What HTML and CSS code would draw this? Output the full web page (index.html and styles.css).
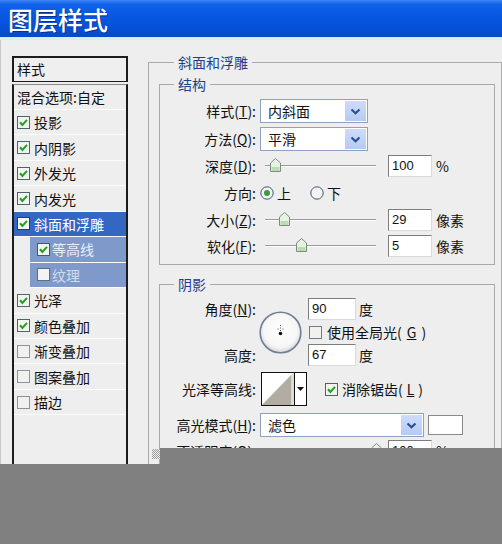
FILE: index.html
```html
<!DOCTYPE html>
<html lang="zh-CN">
<head>
<meta charset="utf-8">
<title>图层样式</title>
<link rel="stylesheet" href="styles.css">
</head>
<body>
<div class="win">
  <div class="titlebar"><span class="title">图层样式</span></div>
  <div class="body">
    <div class="side">
      <div class="side-head">样式</div>
      <div class="side-list">
        <div class="row blend">混合选项:自定</div>
        <div class="row"><svg class="cb" viewBox="0 0 13 13"><rect x="0.5" y="0.5" width="12" height="12" fill="#f3f3ef" stroke="#4b6470"/><path d="M3 6.3 L5.4 8.9 L10 3.9" fill="none" stroke="#21a121" stroke-width="2"/></svg>投影</div>
        <div class="row"><svg class="cb" viewBox="0 0 13 13"><rect x="0.5" y="0.5" width="12" height="12" fill="#f3f3ef" stroke="#4b6470"/><path d="M3 6.3 L5.4 8.9 L10 3.9" fill="none" stroke="#21a121" stroke-width="2"/></svg>内阴影</div>
        <div class="row"><svg class="cb" viewBox="0 0 13 13"><rect x="0.5" y="0.5" width="12" height="12" fill="#f3f3ef" stroke="#4b6470"/><path d="M3 6.3 L5.4 8.9 L10 3.9" fill="none" stroke="#21a121" stroke-width="2"/></svg>外发光</div>
        <div class="row"><svg class="cb" viewBox="0 0 13 13"><rect x="0.5" y="0.5" width="12" height="12" fill="#f3f3ef" stroke="#4b6470"/><path d="M3 6.3 L5.4 8.9 L10 3.9" fill="none" stroke="#21a121" stroke-width="2"/></svg>内发光</div>
        <div class="row sel"><svg class="cb" viewBox="0 0 13 13"><rect x="0.5" y="0.5" width="12" height="12" fill="#f6f6f6" stroke="#1d3c70"/><path d="M3 6.3 L5.4 8.9 L10 3.9" fill="none" stroke="#21a121" stroke-width="2"/></svg>斜面和浮雕</div>
        <div class="row sub"><svg class="cb" viewBox="0 0 13 13"><rect x="0.5" y="0.5" width="12" height="12" fill="#f3f3ef" stroke="#3e5878"/><path d="M3 6.3 L5.4 8.9 L10 3.9" fill="none" stroke="#21a121" stroke-width="2"/></svg>等高线</div>
        <div class="row sub dim"><svg class="cb" viewBox="0 0 13 13"><rect x="0.5" y="0.5" width="12" height="12" fill="#f3f3ef" stroke="#55708e"/></svg>纹理</div>
        <div class="row"><svg class="cb" viewBox="0 0 13 13"><rect x="0.5" y="0.5" width="12" height="12" fill="#f3f3ef" stroke="#4b6470"/><path d="M3 6.3 L5.4 8.9 L10 3.9" fill="none" stroke="#21a121" stroke-width="2"/></svg>光泽</div>
        <div class="row"><svg class="cb" viewBox="0 0 13 13"><rect x="0.5" y="0.5" width="12" height="12" fill="#f3f3ef" stroke="#4b6470"/><path d="M3 6.3 L5.4 8.9 L10 3.9" fill="none" stroke="#21a121" stroke-width="2"/></svg>颜色叠加</div>
        <div class="row"><svg class="cb" viewBox="0 0 13 13"><rect x="0.5" y="0.5" width="12" height="12" fill="#f1f1ef" stroke="#8a949a"/></svg>渐变叠加</div>
        <div class="row"><svg class="cb" viewBox="0 0 13 13"><rect x="0.5" y="0.5" width="12" height="12" fill="#f1f1ef" stroke="#8a949a"/></svg>图案叠加</div>
        <div class="row"><svg class="cb" viewBox="0 0 13 13"><rect x="0.5" y="0.5" width="12" height="12" fill="#f1f1ef" stroke="#8a949a"/></svg>描边</div>
      </div>
    </div>

    <div class="main">
      <fieldset class="outer">
        <legend>斜面和浮雕</legend>

        <fieldset class="inner struct">
          <legend>结构</legend>
          <div class="sgrid">
            <div class="lbl">样式(<u>T</u>):</div>
            <div class="select w108"><span class="sv">内斜面</span><span class="dd"><svg width="11" height="7" viewBox="0 0 11 7"><path d="M1.5 1.5 L5.5 5.2 L9.5 1.5" fill="none" stroke="#2b4f8e" stroke-width="2.2"/></svg></span></div>
            <div></div><div></div>

            <div class="lbl">方法(<u>Q</u>):</div>
            <div class="select w108"><span class="sv">平滑</span><span class="dd"><svg width="11" height="7" viewBox="0 0 11 7"><path d="M1.5 1.5 L5.5 5.2 L9.5 1.5" fill="none" stroke="#2b4f8e" stroke-width="2.2"/></svg></span></div>
            <div></div><div></div>

            <div class="lbl">深度(<u>D</u>):</div>
            <div class="slider"><span class="thumb" style="left:5px"><svg width="11" height="14" viewBox="0 0 11 14"><path d="M0.5 5 L5.5 0.5 L10.5 5 L10.5 13.5 L0.5 13.5 Z" fill="#e6f2e2" stroke="#7f8a80"/><rect x="1.5" y="9" width="8" height="4" fill="#b9dcb0"/></svg></span></div>
            <div class="num">100</div>
            <div class="unit">%</div>

            <div class="lbl">方向:</div>
            <div class="radios">
              <span class="ropt"><svg width="14" height="14" viewBox="0 0 14 14"><circle cx="7" cy="7" r="6.2" fill="#f4f4f2" stroke="#3d5573"/><circle cx="7" cy="7" r="3" fill="#3d9b3d"/></svg>上</span>
              <span class="ropt"><svg width="14" height="14" viewBox="0 0 14 14"><circle cx="7" cy="7" r="6.2" fill="#f4f4f2" stroke="#3d5573"/></svg>下</span>
            </div>

            <div class="lbl">大小(<u>Z</u>):</div>
            <div class="slider"><span class="thumb" style="left:14px"><svg width="11" height="14" viewBox="0 0 11 14"><path d="M0.5 5 L5.5 0.5 L10.5 5 L10.5 13.5 L0.5 13.5 Z" fill="#e6f2e2" stroke="#7f8a80"/><rect x="1.5" y="9" width="8" height="4" fill="#b9dcb0"/></svg></span></div>
            <div class="num">29</div>
            <div class="unit">像素</div>

            <div class="lbl">软化(<u>F</u>):</div>
            <div class="slider"><span class="thumb" style="left:31px"><svg width="11" height="14" viewBox="0 0 11 14"><path d="M0.5 5 L5.5 0.5 L10.5 5 L10.5 13.5 L0.5 13.5 Z" fill="#e6f2e2" stroke="#7f8a80"/><rect x="1.5" y="9" width="8" height="4" fill="#b9dcb0"/></svg></span></div>
            <div class="num">5</div>
            <div class="unit">像素</div>
          </div>
        </fieldset>

        <fieldset class="inner shade">
          <legend>阴影</legend>
          <div class="dgrid">
            <div class="lbl r1">角度(<u>N</u>):</div>
            <div class="dial">
              <svg width="43" height="43" viewBox="0 0 43 43">
                <defs><radialGradient id="dg" cx="50%" cy="45%" r="55%"><stop offset="0%" stop-color="#ffffff"/><stop offset="75%" stop-color="#f6f6f6"/><stop offset="100%" stop-color="#d6d6d6"/></radialGradient></defs>
                <circle cx="21.5" cy="21.5" r="20.3" fill="url(#dg)" stroke="#6f7d95" stroke-width="1.6"/>
                <path d="M21.5 14 V15 M21.5 16.5 V17.5 M21.5 19 V20 M18.5 18 H19.5 M23.5 18 H24.5" stroke="#555" stroke-width="1"/>
                <circle cx="21.5" cy="22.5" r="1.8" fill="#111"/>
              </svg>
            </div>
            <div class="vu r1"><div class="num w48">90</div><span class="unit">度</span></div>
            <div class="chk r2"><svg class="cb" viewBox="0 0 13 13"><rect x="0.5" y="0.5" width="12" height="12" fill="#f1f1ef" stroke="#6e7d88"/></svg>使用全局光(<u>G</u>)</div>
            <div class="lbl r3">高度:</div>
            <div class="vu r3"><div class="num w48">67</div><span class="unit">度</span></div>
          </div>

          <div class="frow contour-row">
            <div class="lbl">光泽等高线:</div>
            <div class="contour">
              <span class="cprev"><svg width="32" height="32" viewBox="0 0 32 32"><rect width="32" height="32" fill="#fff"/><path d="M0 32 L29 2 L29 32 Z" fill="#b2ada2"/><path d="M29 2 L31 0 L32 0 L32 32 L29 32 Z" fill="#dedbd3"/></svg></span>
              <span class="carrow"><svg width="7" height="4" viewBox="0 0 7 4"><path d="M0 0 H7 L3.5 4 Z" fill="#111"/></svg></span>
            </div>
            <div class="chk aa"><svg class="cb" viewBox="0 0 13 13"><rect x="0.5" y="0.5" width="12" height="12" fill="#f3f3ef" stroke="#4b6470"/><path d="M3 6.3 L5.4 8.9 L10 3.9" fill="none" stroke="#21a121" stroke-width="2"/></svg>消除锯齿(<u>L</u>)</div>
          </div>

          <div class="frow hl-row">
            <div class="lbl">高光模式(<u>H</u>):</div>
            <div class="select w164"><span class="sv">滤色</span><span class="dd"><svg width="11" height="7" viewBox="0 0 11 7"><path d="M1.5 1.5 L5.5 5.2 L9.5 1.5" fill="none" stroke="#2b4f8e" stroke-width="2.2"/></svg></span></div>
            <div class="swatch"></div>
          </div>

          <div class="frow op-row">
            <div class="lbl">不透明度(<u>O</u>):</div>
            <div class="slider op"><span class="thumb" style="left:106px"><svg width="11" height="14" viewBox="0 0 11 14"><path d="M0.5 5 L5.5 0.5 L10.5 5 L10.5 13.5 L0.5 13.5 Z" fill="#e6f2e2" stroke="#7f8a80"/><rect x="1.5" y="9" width="8" height="4" fill="#b9dcb0"/></svg></span></div>
            <div class="num op-num">100</div>
            <div class="unit">%</div>
          </div>
        </fieldset>
      </fieldset>
    </div>
  </div>
  <div class="dots"></div>
  <div class="mask-a"></div>
  <div class="mask-b"></div>
</div>
</body>
</html>
```

FILE: styles.css
```css
html, body {
  margin: 0;
  padding: 0;
}
body {
  width: 502px;
  height: 544px;
  overflow: hidden;
  background: #808080;
  font-family: "Noto Sans CJK SC", "Noto Sans", sans-serif;
  font-size: 14px;
  color: #111;
}
.win {
  position: relative;
  width: 502px;
  height: 544px;
  background: #eeeeee;
  box-shadow: inset 1px 0 0 #c9c9c9;
}
.titlebar {
  height: 40px;
  box-sizing: border-box;
  padding: 2px 0 0 8px;
  display: flex;
  align-items: center;
  background: linear-gradient(#3a86f4 0%, #1060e8 12%, #0756e0 50%, #0650d8 80%, #0a48c4 100%);
  border-bottom: 3px solid #dbeaf5;
}
.title {
  color: #fff;
  font-size: 25px;
  font-weight: 500;
  line-height: 1;
  text-shadow: 1px 1px 0 #0b2f8a;
}
.body {
  display: flex;
  align-items: flex-start;
}

/* left list */
.side {
  margin: 16px 0 0 12px;
  width: 116px;
  height: 420px;
  display: flex;
  flex-direction: column;
}
.side-head {
  height: 26px;
  box-sizing: border-box;
  border: 2px solid #1c1c1c;
  border-bottom-width: 1px;
  padding-left: 3px;
  line-height: 22px;
  background: #efefef;
}
.side-list {
  flex: 1;
  margin-top: 2px;
  border-top: 1px solid #8a8a8a;
  border-left: 2px solid #1c1c1c;
  border-right: 2px solid #1c1c1c;
  background: #eeeeee;
}
.row {
  height: 25.45px;
  box-sizing: border-box;
  border-bottom: 1px solid #fcfcfc;
  display: flex;
  align-items: center;
  gap: 4px;
  padding-left: 3px;
  white-space: nowrap;
}
.row.blend {
  height: 25px;
}
.cb {
  width: 13px;
  height: 13px;
  flex: none;
  display: block;
}
.row.sel {
  background: #3467c2;
  color: #fff;
}
.row.sub {
  margin-left: 16px;
  padding-left: 7px;
  gap: 2px;
  background: #7f99cb;
  color: #e8eefa;
}
.row.sub.dim {
  color: #d3ddf0;
}

/* right panel */
.main {
  margin-left: 20px;
  width: 354px;
}
fieldset {
  margin: 0;
  padding: 0;
  min-width: 0;
  border: 1px solid #a9a9a9;
}
legend {
  font-size: 14px;
  line-height: 16px;
  padding: 0 4px;
  color: #1e3f8a;
}
.outer {
  margin-top: 14px;
  padding: 0 6px 0 10px;
  height: 460px;
  box-sizing: border-box;
}
.outer > legend {
  margin-left: 15px;
}
.inner > legend {
  margin-left: 14px;
}
.struct {
  margin-top: 6px;
  padding: 7px 0 7px 0;
}
.shade {
  margin-top: 11px;
  padding: 6px 0 20px 0;
}
.sgrid {
  display: grid;
  grid-template-columns: 96px 124px 44px auto;
  grid-template-rows: 24px 24px 22px 24px 22px 22px;
  column-gap: 4px;
  row-gap: 4px;
}
.lbl {
  text-align: right;
  white-space: nowrap;
  align-self: center;
  line-height: 18px;
}
u {
  text-decoration: underline;
  text-underline-offset: 1px;
}
.select {
  display: flex;
  height: 24px;
  box-sizing: border-box;
  border: 1px solid #8ea2bf;
  background: #fff;
}
.w108 { width: 108px; }
.w164 { width: 164px; }
.sv {
  flex: 1;
  padding-left: 7px;
  line-height: 22px;
  white-space: nowrap;
}
.dd {
  width: 21px;
  margin: 1px;
  background: linear-gradient(#cddcfb, #b6cbf3);
  display: flex;
  align-items: center;
  justify-content: center;
}
.slider {
  position: relative;
  margin-left: 5px;
  width: 111px;
  height: 22px;
  align-self: center;
}
.slider::before {
  content: "";
  position: absolute;
  left: 0;
  right: 0;
  top: 10px;
  height: 0;
  border-top: 1px solid #9c9c9c;
  border-bottom: 1px solid #ffffff;
}
.thumb {
  position: absolute;
  top: 3px;
  width: 11px;
  height: 14px;
}
.thumb svg { display: block; }
.num {
  width: 44px;
  height: 22px;
  box-sizing: border-box;
  border: 1px solid;
  border-color: #7d7d7d #dadada #dadada #7d7d7d;
  background: #fff;
  font-family: "Liberation Sans", Arial, sans-serif;
  font-size: 13px;
  line-height: 20px;
  padding-left: 3px;
  align-self: center;
}
.unit {
  align-self: center;
  white-space: nowrap;
  line-height: 18px;
}
.radios {
  grid-column: 2 / 5;
  display: flex;
  align-items: center;
  gap: 19px;
}
.ropt {
  display: flex;
  align-items: center;
  gap: 3px;
}
.ropt svg { display: block; }

/* shading */
.dgrid {
  display: grid;
  grid-template-columns: 96px 44px auto;
  grid-template-rows: 22px 16px 22px;
  column-gap: 4px;
  row-gap: 4px;
}
.r1 { grid-row: 1; }
.r2 { grid-row: 2; grid-column: 3; }
.r3 { grid-row: 3; }
.lbl.r1, .lbl.r3 { grid-column: 1; }
.vu.r1, .vu.r3 { grid-column: 3; }
.dial {
  grid-column: 2;
  grid-row: 1 / 4;
  align-self: center;
  margin-left: -1px;
  height: 43px;
}
.dial svg { display: block; }
.vu {
  display: flex;
  align-items: center;
  gap: 3px;
}
.w48 { width: 48px; }
.chk {
  display: flex;
  align-items: center;
  gap: 5px;
  white-space: nowrap;
  margin-left: 1px;
}
.frow {
  display: flex;
  align-items: center;
  gap: 4px;
}
.frow .lbl {
  width: 96px;
  flex: none;
}
.contour-row {
  margin-top: 6px;
  height: 34px;
}
.contour {
  display: flex;
  margin-left: 1px;
  height: 34px;
}
.cprev {
  width: 34px;
  height: 34px;
  box-sizing: border-box;
  border: 1px solid #111;
}
.cprev svg { display: block; }
.carrow {
  width: 12px;
  height: 34px;
  box-sizing: border-box;
  border: 1px solid #111;
  border-left: none;
  background: #fff;
  display: flex;
  align-items: center;
  justify-content: center;
}
.carrow svg { display: block; }
.chk.aa {
  margin-left: 14px;
  gap: 4px;
}
.hl-row {
  margin-top: 7px;
  height: 24px;
}
.swatch {
  width: 35px;
  height: 20px;
  box-sizing: border-box;
  border: 1px solid #8a8a8a;
  background: #fff;
}
.op-row {
  margin-top: 3px;
  height: 22px;
}
.slider.op {
  margin-left: 5px;
  flex: none;
}
.op-num {
  margin-left: 8px;
}

/* overlays */
.dots {
  position: absolute;
  left: 152px;
  top: 449px;
  width: 8px;
  height: 10px;
  background-image: repeating-conic-gradient(#9a9a9a 0 25%, #efefef 0 50%);
  background-size: 2px 2px;
}
.mask-a {
  position: absolute;
  left: 160px;
  top: 448px;
  right: 0;
  bottom: 0;
  background: #808080;
}
.mask-b {
  position: absolute;
  left: 0;
  top: 464px;
  right: 0;
  bottom: 0;
  background: #808080;
}
```
